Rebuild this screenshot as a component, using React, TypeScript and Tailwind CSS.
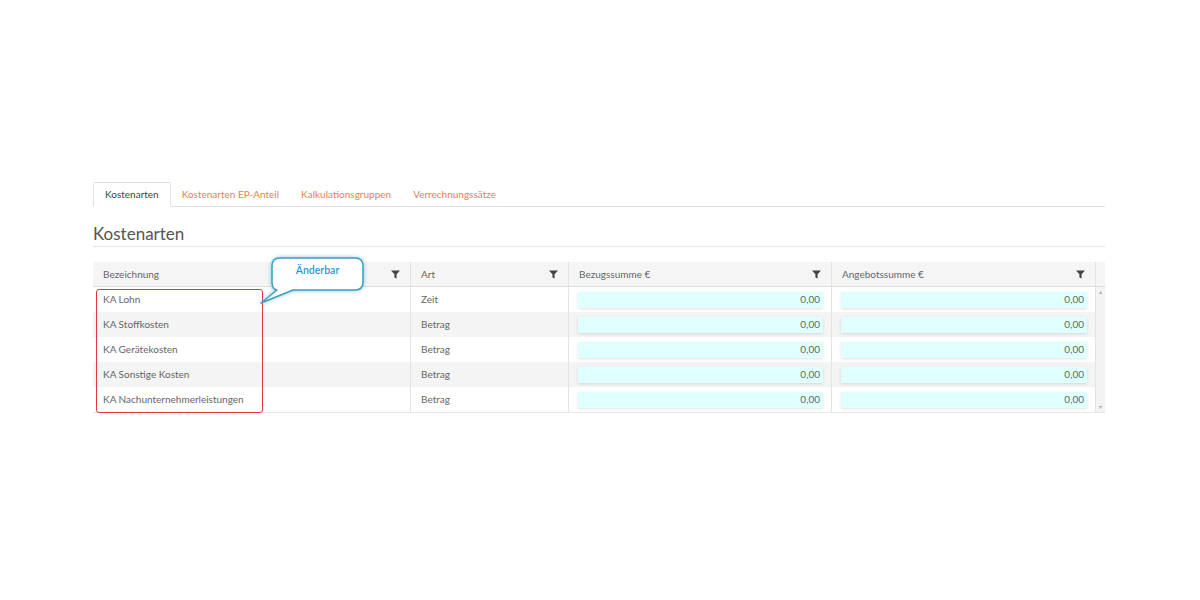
import React from 'react';

const rows = [
  { name: 'KA Lohn', art: 'Zeit' },
  { name: 'KA Stoffkosten', art: 'Betrag' },
  { name: 'KA Gerätekosten', art: 'Betrag' },
  { name: 'KA Sonstige Kosten', art: 'Betrag' },
  { name: 'KA Nachunternehmerleistungen', art: 'Betrag' },
];

const tabs = ['Kostenarten', 'Kostenarten EP-Anteil', 'Kalkulationsgruppen', 'Verrechnungssätze'];

function Filter() {
  return (
    <svg width="9" height="9" viewBox="0 0 10 10" className="shrink-0">
      <path d="M0 0.5H10L6.2 4.8V9.5L3.8 8.3V4.8Z" fill="#444" />
    </svg>
  );
}

function HeadCell({ label, filter = true }: { label: string; filter?: boolean }) {
  return (
    <div className="flex items-center justify-between border-r border-[#e3e3e3] px-[10px]">
      <span>{label}</span>
      {filter && <Filter />}
    </div>
  );
}

function Amount() {
  return (
    <div className="flex items-center border-r border-[#e3e3e3] pl-[9px] pr-[8px]">
      <div className="flex h-[16px] w-full items-center justify-end bg-[#e0ffff] pr-[3px] shadow-[0_1px_3px_rgba(0,0,0,0.12)]">
        0,00
      </div>
    </div>
  );
}

export default function App() {
  return (
    <div className="h-[600px] w-[1200px] bg-white text-[10px] text-[#666]" style={{ fontFamily: 'Lato, "Open Sans", sans-serif' }}>
      <div className="ml-[93px] w-[1012px] pt-[182px]">
        {/* tabs */}
        <div className="flex h-[25px] border-b border-[#e2e2e2]">
          {tabs.map((t, i) => (
            <div
              key={t}
              className={
                i === 0
                  ? '-mb-px flex items-center rounded-t-[2px] border border-b-white border-[#e2e2e2] bg-white px-[11px] text-[#444]'
                  : 'flex items-center px-[11px] text-[#e8824a]'
              }
            >
              {t}
            </div>
          ))}
        </div>

        <h1 className="mt-[16px] border-b border-[#e6e6e6] pb-[2px] text-[17px] leading-[21px] text-[#555]">Kostenarten</h1>

        {/* table */}
        <div className="relative mt-[15px] border-b border-[#e6e6e6]">
          <div className="grid h-[25px] grid-cols-[318px_158px_263px_264px_9px] border-b border-[#dedede] bg-[#f5f5f5] text-[#666]">
            <HeadCell label="Bezeichnung" />
            <HeadCell label="Art" />
            <HeadCell label="Bezugssumme €" />
            <HeadCell label="Angebotssumme €" />
            <div />
          </div>
          <div className="flex">
            <div className="flex flex-col">
              {rows.map((r, i) => (
                <div
                  key={r.name}
                  className={`grid h-[25px] grid-cols-[318px_158px_263px_264px] ${i % 2 === 1 ? 'bg-[#f4f4f4]' : 'bg-white'}`}
                >
                  <div className="flex items-center border-r border-[#e3e3e3] px-[10px]">{r.name}</div>
                  <div className="flex items-center border-r border-[#e3e3e3] px-[10px]">{r.art}</div>
                  <Amount />
                  <Amount />
                </div>
              ))}
            </div>
            <div className="flex w-[9px] flex-col items-center justify-between bg-[#f3f3f3] py-[1px] text-[6px] leading-[8px] text-[#aaa]">
              <span>▴</span>
              <span>▾</span>
            </div>
          </div>

          {/* highlight */}
          <div className="absolute left-[3px] top-[27px] h-[124px] w-[167px] rounded-[3px] border-[1.5px] border-[#e2373d]" />

          {/* callout */}
          <div className="absolute left-[157px] top-[-8px] h-[56px] w-[120px]">
            <svg width="120" height="56" viewBox="0 0 120 56" className="absolute left-0 top-0 drop-shadow-[0_0_2px_rgba(60,160,200,0.6)]">
              <path
                d="M30 4H105Q113 4 113 12V28Q113 36 105 36H43L11 49L27 36Q22 35 22 28V12Q22 4 30 4Z"
                fill="#fff"
                stroke="#3d9fc2"
                strokeWidth="1.5"
                strokeLinejoin="round"
              />
            </svg>
            <div className="absolute left-[22px] top-[9px] w-[91px] text-center text-[10.5px] font-semibold text-[#1d9bd6]">Änderbar</div>
          </div>
        </div>
      </div>
    </div>
  );
}
